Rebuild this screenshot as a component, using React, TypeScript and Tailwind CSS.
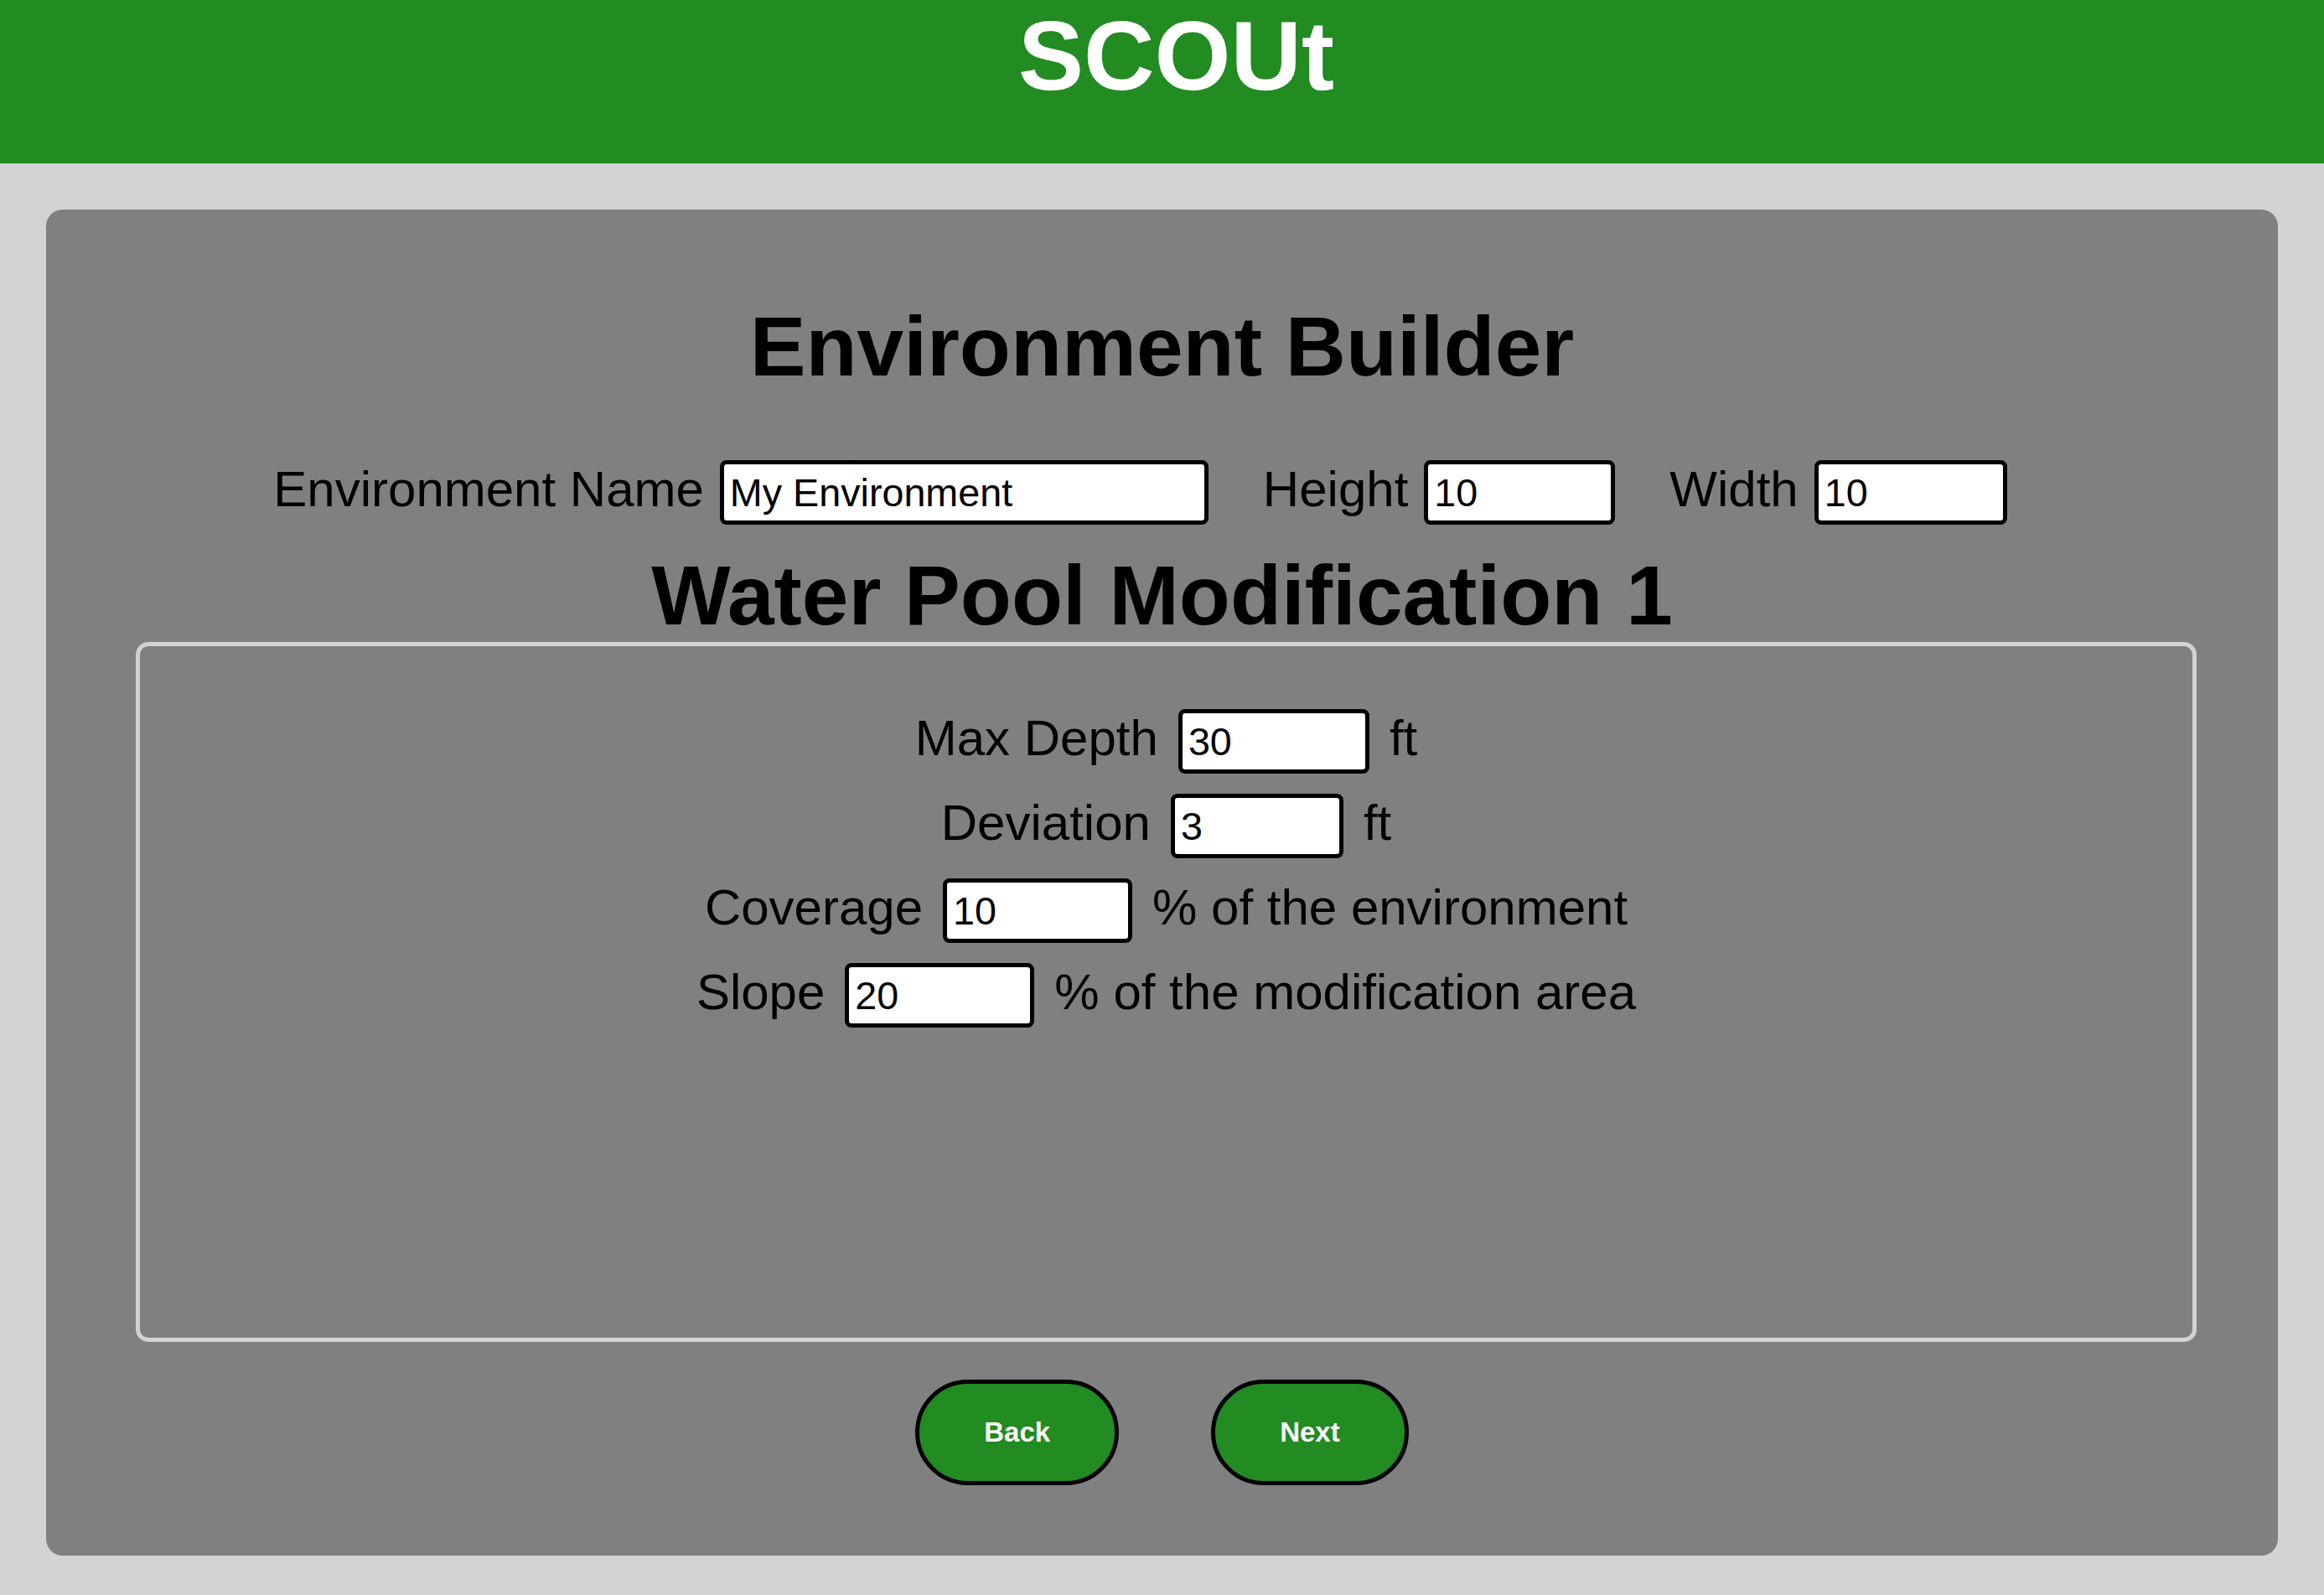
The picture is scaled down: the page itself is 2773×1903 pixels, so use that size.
import { useState } from "react";

const font = { fontFamily: '"Liberation Sans", Arial, sans-serif' };

function Field({ label, value, width, unit }: { label: string; value: string; width: string; unit?: string }) {
  const [val, setVal] = useState(value);
  return (
    <div className="flex items-baseline justify-center gap-[24px]">
      <span className="text-[60px] leading-none text-black">{label}</span>
      <input
        value={val}
        onChange={(e) => setVal(e.target.value)}
        className={`${width} h-[77px] border-[5px] border-black rounded-[8px] bg-white pl-[7px] text-[46.7px] text-black outline-none`}
      />
      {unit && <span className="text-[60px] leading-none text-black">{unit}</span>}
    </div>
  );
}

function TopInput({ label, value, width }: { label: string; value: string; width: string }) {
  const [val, setVal] = useState(value);
  return (
    <div className="flex items-baseline gap-[19px]">
      <span className="text-[60px] leading-none text-black">{label}</span>
      <input
        value={val}
        onChange={(e) => setVal(e.target.value)}
        className={`${width} h-[77px] border-[5px] border-black rounded-[8px] bg-white pl-[7px] text-[46.7px] text-black outline-none`}
      />
    </div>
  );
}

export default function App() {
  return (
    <div className="min-h-screen bg-[#d3d3d3] pb-[47px]" style={font}>
      <header className="h-[195px] bg-[#228b22] pt-[8px] pl-[34px] text-center">
        <h1 className="text-[117px] leading-none font-bold text-white">SCOUt</h1>
      </header>

      <main className="mx-[55px] mt-[55px] rounded-[20px] bg-[#808080] pt-[113px] pb-[84px]">
        <h2 className="text-center text-[100px] leading-none font-bold text-black">Environment Builder</h2>

        <div className="mt-[86px] flex items-baseline justify-center gap-[65px] pr-[52px]">
          <TopInput label="Environment Name" value="My Environment" width="w-[583px]" />
          <TopInput label="Height" value="10" width="w-[228px]" />
          <TopInput label="Width" value="10" width="w-[230px]" />
        </div>

        <h2 className="mt-[34px] text-center text-[100px] leading-none font-bold text-black">
          Water Pool Modification 1
        </h2>

        <section className="mt-[6px] ml-[107px] mr-[97px] h-[835px] rounded-[15px] border-[5px] border-[#d3d3d3] pt-[75px]">
          <div className="flex flex-col gap-[24px]">
            <Field label="Max Depth" value="30" width="w-[228px]" unit="ft" />
            <Field label="Deviation" value="3" width="w-[206px]" unit="ft" />
            <Field label="Coverage" value="10" width="w-[226px]" unit="% of the environment" />
            <Field label="Slope" value="20" width="w-[226px]" unit="% of the modification area" />
          </div>
        </section>

        <div className="mt-[45px] flex justify-center gap-[110px]">
          <button className="h-[126px] rounded-full border-[5px] border-black bg-[#228b22] px-[77px] text-[33px] font-bold text-white">
            Back
          </button>
          <button className="h-[126px] rounded-full border-[5px] border-black bg-[#228b22] px-[77px] text-[33px] font-bold text-white">
            Next
          </button>
        </div>
      </main>
    </div>
  );
}
